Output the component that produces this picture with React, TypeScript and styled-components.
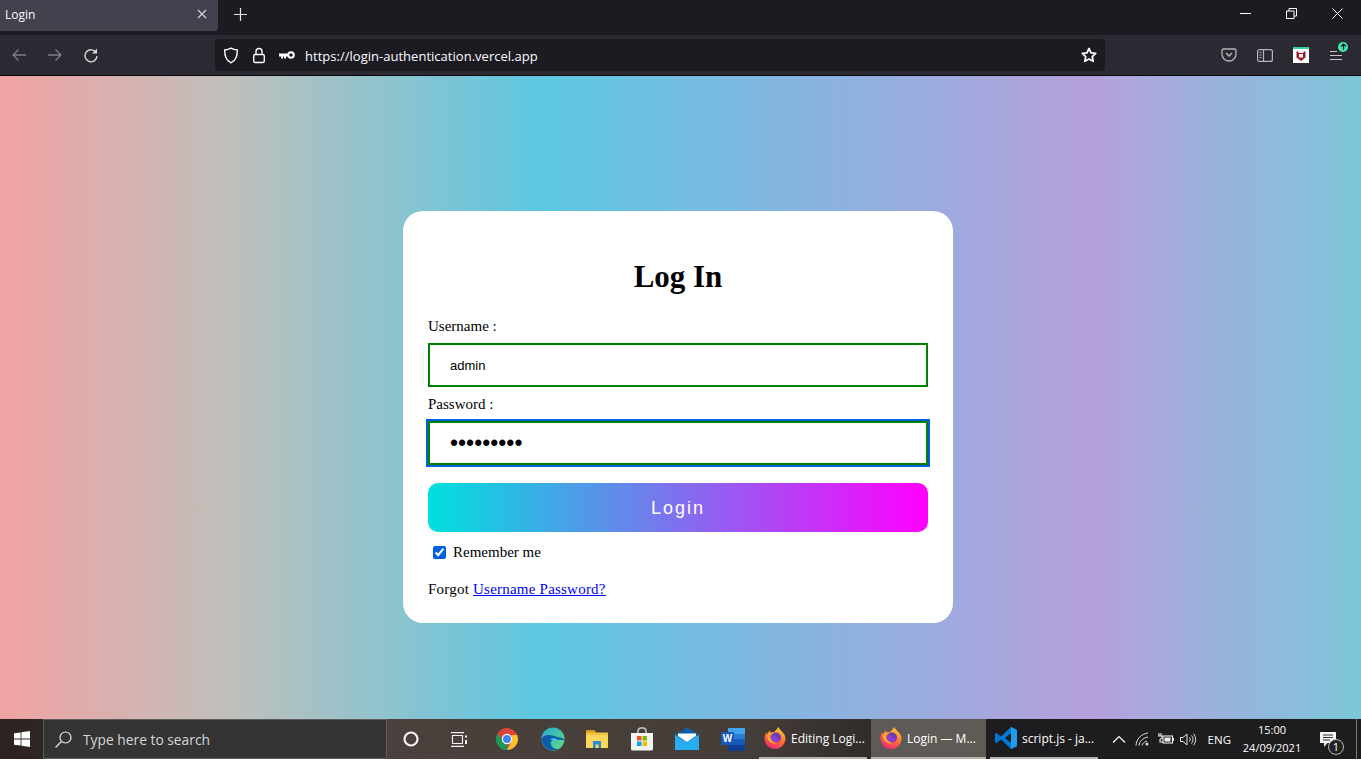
import styled, { createGlobalStyle } from "styled-components";

const GlobalStyle = createGlobalStyle`
  html, body {
    margin: 0;
    padding: 0;
    background: #fff;
    overflow: hidden;
  }
`;

const uiFont = `"Open Sans", "Noto Sans", sans-serif`;

const Screen = styled.div`
  width: 1361px;
  height: 765px;
  display: flex;
  flex-direction: column;
  overflow: hidden;
`;

const TabStrip = styled.div`
  height: 35px;
  flex: none;
  display: flex;
  background: #1c1b22;
  color: #fbfbfe;
  font-family: ${uiFont};
`;

const Tab = styled.div`
  width: 218px;
  height: 31px;
  padding: 0 11px 3px 5px;
  box-sizing: border-box;
  display: flex;
  align-items: center;
  justify-content: space-between;
  background: #42414d;
  border-radius: 0 0 4px 0;
  font-size: 12px;
`;

const IconBtn = styled.div<{ $w?: number; $dim?: boolean }>`
  width: ${(p) => p.$w ?? 36}px;
  flex: none;
  display: flex;
  align-items: center;
  justify-content: center;
  opacity: ${(p) => (p.$dim ? 0.4 : 1)};
`;

const NewTab = styled(IconBtn)`
  height: 28px;
  margin-left: 4px;
`;

const WindowControls = styled.div`
  margin-left: auto;
  height: 26px;
  display: flex;
  padding-right: 1px;
`;

const WindowBtn = styled(IconBtn)`
  width: 46px;
`;

const Toolbar = styled.div`
  height: 41px;
  flex: none;
  box-sizing: border-box;
  display: flex;
  align-items: center;
  padding: 0 6px 0 1px;
  background: #2b2a33;
  border-bottom: 1px solid #0c0c0d;
  color: #fbfbfe;
`;

const UrlBar = styled.div`
  width: 890px;
  height: 32px;
  margin-left: 106px;
  margin-right: 106px;
  padding: 0 8px;
  box-sizing: border-box;
  display: flex;
  align-items: center;
  gap: 12px;
  background: #1c1b22;
  border-radius: 4px;
  font-family: ${uiFont};
  font-size: 13px;
`;

const UrlText = styled.span`
  margin-left: -2px;
  padding-top: 2px;
  flex: 1;
  letter-spacing: 0.02px;
`;

const ToolIcon = styled(IconBtn)`
  width: 36px;
`;

const MenuBtn = styled(IconBtn)`
  position: relative;
  height: 39px;
`;

const UpdateDot = styled.span`
  position: absolute;
  left: 19px;
  top: 6px;
  width: 10px;
  height: 10px;
  border-radius: 50%;
  background: #3fe8b0;
  display: flex;
  align-items: center;
  justify-content: center;
`;

const Backdrop = styled.main`
  height: 643px;
  flex: none;
  padding: 135px 5px 0 0;
  box-sizing: border-box;
  display: flex;
  justify-content: center;
  align-items: flex-start;
  background: linear-gradient(
    90deg,
    #f0a2a2 0%,
    #bfbfbb 17%,
    #5cc7e2 40%,
    #b6a0dc 80%,
    #7cc6d9 100%
  );
`;

const Card = styled.form`
  width: 550px;
  height: 412px;
  padding: 48px 25px 0;
  box-sizing: border-box;
  background: #fff;
  border-radius: 20px;
  font-family: "Liberation Serif", "Times New Roman", serif;
  font-size: 15px;
  color: #000;
`;

const Title = styled.h1`
  margin: 0 0 23px;
  text-align: center;
  font-size: 31px;
  line-height: 36px;
  font-weight: 700;
`;

const FieldLabel = styled.label`
  display: block;
  height: 17px;
  line-height: 17px;
  margin-bottom: 8px;
`;

const TextField = styled.input<{ $focused?: boolean }>`
  display: block;
  width: 100%;
  height: 44px;
  padding: 0 20px;
  box-sizing: border-box;
  margin-bottom: 9px;
  border: 2px solid #008000;
  border-radius: 0;
  outline: ${(p) => (p.$focused ? "2px solid #0060df" : "none")};
  outline-offset: 0;
  background: #fff;
  font-family: "Liberation Sans", Arial, sans-serif;
  font-size: 13px;
  color: #000;
`;

const PasswordField = styled(TextField)`
  font-size: 23px;
  margin-bottom: 18px;
`;

const LoginButton = styled.button`
  display: block;
  width: 100%;
  height: 49px;
  padding: 1px 0 0;
  border: 0;
  border-radius: 10px;
  background: linear-gradient(90deg, #00e0de 0%, #ff00ff 100%);
  color: #fff;
  font-family: "Liberation Sans", Arial, sans-serif;
  font-size: 18px;
  letter-spacing: 2px;
`;

const RememberRow = styled.label`
  display: flex;
  align-items: center;
  height: 17px;
  margin: 12px 0 20px 5px;
`;

const RememberBox = styled.input`
  width: 13px;
  height: 13px;
  margin: 0 7px 0 0;
  accent-color: #0060df;
`;

const ForgotLine = styled.div`
  height: 17px;
  line-height: 17px;
  letter-spacing: 0.22px;
`;

const ForgotLink = styled.a`
  color: #0000ee;
  text-decoration: underline;
`;

const Taskbar = styled.div`
  height: 40px;
  flex: none;
  display: flex;
  align-items: stretch;
  background: linear-gradient(90deg, #2c2320 0%, #4a413c 28%, #453d38 55%, #1d1c1e 73%, #1d1c1e 100%);
  color: #fff;
  font-family: ${uiFont};
`;

const StartBtn = styled(IconBtn)`
  width: 43px;
`;

const SearchBox = styled.div`
  width: 344px;
  flex: none;
  box-sizing: border-box;
  display: flex;
  align-items: center;
  gap: 11px;
  padding-left: 11px;
  background: #343434;
  border: 1px solid #5c5c5c;
  color: #d6d6d6;
  font-size: 13.8px;
`;

const TrayIcon = styled(IconBtn)``;

const AppTask = styled.div<{ $w: number; $active?: boolean }>`
  width: ${(p) => p.$w}px;
  flex: none;
  box-sizing: border-box;
  margin-left: 4px;
  display: flex;
  align-items: center;
  gap: 4px;
  padding-left: ${(p) => (p.$active ? 8 : 4)}px;
  font-size: 12px;
  white-space: nowrap;
  background: ${(p) => (p.$active ? "#5f5a56" : "transparent")};
  border-bottom: 2px solid #b5b3ae;
`;

const Tray = styled.div`
  margin-left: auto;
  display: flex;
  align-items: center;
  font-size: 11.5px;
`;

const Lang = styled.span`
  margin-left: 7px;
`;

const Clock = styled.div`
  width: 62px;
  text-align: center;
  font-size: 11px;
  line-height: 18px;
  margin-left: 10px;
`;

const NotificationWrap = styled.div`
  position: relative;
  width: 47px;
  height: 40px;
  padding-left: 11px;
  margin-left: 6px;
  box-sizing: border-box;
  display: flex;
  align-items: center;
`;

const NotificationBadge = styled.span`
  position: absolute;
  left: 19px;
  top: 20px;
  width: 16px;
  height: 16px;
  box-sizing: border-box;
  border: 1px solid #b8b8b8;
  border-radius: 50%;
  background: #222;
  font-size: 11px;
  line-height: 14px;
  text-align: center;
`;

const ShowDesktop = styled.div`
  width: 1px;
  height: 40px;
  margin-right: 4px;
  background: #7a7a7a;
`;

const Bottom = styled.div`
  flex: 1;
  background: #fff;
`;

const FirefoxIcon = ({ id }: { id: string }) => (
  <svg width="24" height="24" viewBox="0 0 24 24">
    <defs>
      <linearGradient id={id} x1="0.75" y1="0" x2="0.3" y2="1">
        <stop offset="0" stopColor="#ffd23a" />
        <stop offset="0.45" stopColor="#ff7a2e" />
        <stop offset="1" stopColor="#f0247a" />
      </linearGradient>
    </defs>
    <path d="M15.500 1c.6 2 2 3 3.400 4.400 2.400 2.300 3.600 4.600 3.600 7.100 0 5.800-4.700 10.500-10.500 10.500S1.500 18.300 1.500 12.500c0-2.300.6-4.500 1.700-6.500 0 1 .3 1.800.9 2.400.4-1.800 1.500-3.200 3-4-.2 1 0 1.700.5 2.200 1-.6 2.300-.8 3.600-.5C13 3.500 14.600 2.500 15.500 1z" fill={`url(#${id})`} />
    <circle cx="13" cy="11.500" r="5" fill="#6a3bb8" />
    <path d="M7.500 10c2-1 4.500-1 5.800 0 1.200.9 1.200 2.400 0 2.800 1.500.4 3-.2 3.500-2 .7 3-1.300 5.500-4.300 5.500-3 0-5-2.500-5-5 0-.5 0-.9 0-1.300z" fill="#8f3fd0" />
    <path d="M4.600 8.500c1.500-1.600 4-2.200 6.100-1.500-2 .3-3.500 1.300-4 3 .4 3 2.800 6.500 7 7-3.500 1.500-9-1-9.600-6.500 0-.7.100-1.400.5-2z" fill="#ffb12b" />
  </svg>
);

export default function App() {
  return (
    <Screen>
      <GlobalStyle />
      <TabStrip>
        <Tab>
          <span>Login</span>
          <svg width="10" height="10" viewBox="0 0 10 10" stroke="#d8d8da" strokeWidth="1.100">
            <path d="M1 1l8 8M9 1l-8 8" />
          </svg>
        </Tab>
        <NewTab>
          <svg width="13" height="13" viewBox="0 0 13 13" stroke="#e4e4e6" strokeWidth="1.200">
            <path d="M6.500 0v13M0 6.500h13" />
          </svg>
        </NewTab>
        <WindowControls>
          <WindowBtn>
            <svg width="11" height="1" viewBox="0 0 11 1"><rect width="11" height="1" fill="#fff" /></svg>
          </WindowBtn>
          <WindowBtn>
            <svg width="11" height="11" viewBox="0 0 11 11" fill="none" stroke="#fff">
              <path d="M.5 3h7.500v7.500H.5zM3 3V.5h7.500V8H8" />
            </svg>
          </WindowBtn>
          <WindowBtn>
            <svg width="11" height="11" viewBox="0 0 11 11" stroke="#fff">
              <path d="M.5.5l10 10M10.500.5l-10 10" />
            </svg>
          </WindowBtn>
        </WindowControls>
      </TabStrip>

      <Toolbar>
        <ToolIcon $dim>
          <svg width="16" height="16" viewBox="0 0 16 16" fill="none" stroke="#fbfbfe" strokeWidth="1.300">
            <path d="M15 8H2M7.500 2.500L2 8l5.500 5.500" />
          </svg>
        </ToolIcon>
        <ToolIcon $dim>
          <svg width="16" height="16" viewBox="0 0 16 16" fill="none" stroke="#fbfbfe" strokeWidth="1.300">
            <path d="M1 8h13M8.500 2.500L14 8l-5.500 5.500" />
          </svg>
        </ToolIcon>
        <ToolIcon>
          <svg width="16" height="16" viewBox="0 0 16 16" fill="none" stroke="#d8d8da" strokeWidth="1.400">
            <path d="M13.300 6A6 6 0 1 0 14 9" />
            <path d="M14 1.500V6.500H9z" fill="#d8d8da" stroke="none" />
          </svg>
        </ToolIcon>
        <UrlBar>
          <svg width="16" height="17" viewBox="0 0 16 17" fill="none" stroke="#fbfbfe" strokeWidth="1.400">
            <path d="M8 1.200c2 1.200 4 1.700 6.300 1.800.2 6.500-2 10.800-6.300 12.800C3.700 13.800 1.500 9.500 1.700 3 4 2.900 6 2.400 8 1.200z" />
          </svg>
          <svg width="16" height="17" viewBox="0 0 16 17" fill="none" stroke="#fbfbfe" strokeWidth="1.400">
            <rect x="2.700" y="7.500" width="10.600" height="8" rx="1.500" />
            <path d="M5 7.500V4.500a3 3 0 0 1 6 0v3" />
          </svg>
          <svg width="16" height="10" viewBox="0 0 16 10">
            <path d="M0 3.500h9v3H7v2H5v-2H4v2H2v-2H0z" fill="#fbfbfe" />
            <circle cx="12" cy="5" r="2.800" fill="none" stroke="#fbfbfe" strokeWidth="2" />
          </svg>
          <UrlText>https://login-authentication.vercel.app</UrlText>
          <svg width="16" height="16" viewBox="0 0 16 16" fill="none" stroke="#fbfbfe" strokeWidth="1.800" strokeLinejoin="round">
            <path d="M8 1.500l2 4.300 4.700.6-3.400 3.200.9 4.700L8 12l-4.200 2.300.9-4.700L1.300 6.400 6 5.800z" />
          </svg>
        </UrlBar>
        <ToolIcon>
          <svg width="16" height="14" viewBox="0 0 16 14" fill="none" stroke="#b5b5b9" strokeWidth="1.300">
            <path d="M2.500 1h11A1.500 1.500 0 0 1 15 2.500V6A7 7 0 0 1 1 6V2.500A1.500 1.500 0 0 1 2.500 1z" />
            <path d="M5 5l3 3 3-3" strokeWidth="1.500" />
          </svg>
        </ToolIcon>
        <ToolIcon>
          <svg width="16" height="13" viewBox="0 0 16 13" fill="none" stroke="#b5b5b9" strokeWidth="1.200">
            <rect x=".6" y=".6" width="14.800" height="11.800" rx="2" />
            <path d="M6.500.6v11.800M2.500 3.500h2M2.500 6h2M2.500 8.500h2" />
          </svg>
        </ToolIcon>
        <ToolIcon>
          <svg width="16" height="16" viewBox="0 0 16 16">
            <rect width="16" height="16" fill="#fff" />
            <rect width="16" height="2" fill="#34d399" />
            <path d="M3.500 4.500h2v1.500h5V4.500h2v6L8 14l-4.500-3.500z" fill="#a31621" />
            <rect x="6" y="7" width="4" height="3.500" fill="#fff" />
          </svg>
        </ToolIcon>
        <MenuBtn>
          <svg width="14" height="11" viewBox="0 0 14 11" stroke="#c8c8cc" strokeWidth="1.200">
            <path d="M0 1.500h7M0 5.500h12M0 9.500h12" />
          </svg>
          <UpdateDot>
            <svg width="7" height="7" viewBox="0 0 7 7" stroke="#1c1b22" strokeWidth="1.200" fill="none">
              <path d="M3.500 7V1M1 3.500L3.500 1 6 3.500" />
            </svg>
          </UpdateDot>
        </MenuBtn>
      </Toolbar>

      <Backdrop>
        <Card onSubmit={(e) => e.preventDefault()}>
          <Title>Log In</Title>
          <FieldLabel htmlFor="username">Username :</FieldLabel>
          <TextField id="username" defaultValue="admin" />
          <FieldLabel htmlFor="password">Password :</FieldLabel>
          <PasswordField id="password" type="password" defaultValue="123456789" $focused />
          <LoginButton type="submit">Login</LoginButton>
          <RememberRow>
            <RememberBox type="checkbox" defaultChecked />
            Remember me
          </RememberRow>
          <ForgotLine>
            Forgot <ForgotLink href="#">Username Password?</ForgotLink>
          </ForgotLine>
        </Card>
      </Backdrop>

      <Taskbar>
        <StartBtn>
          <svg width="16" height="16" viewBox="0 0 16 16" fill="#fff">
            <path d="M0 2.300l6.600-.9v6.200H0zM7.400 1.300L16 0v7.600H7.400zM0 8.400h6.600v6.200L0 13.700zM7.400 8.400H16V16l-8.600-1.300z" />
          </svg>
        </StartBtn>
        <SearchBox>
          <svg width="17" height="17" viewBox="0 0 17 17" fill="none" stroke="#e4e4e4" strokeWidth="1.200">
            <circle cx="10.500" cy="6.500" r="5.500" />
            <path d="M6.500 10.500L.5 16.500" />
          </svg>
          Type here to search
        </SearchBox>
        <TrayIcon $w={48}>
          <svg width="16" height="16" viewBox="0 0 16 16" fill="none" stroke="#f2f2f2" strokeWidth="2.200">
            <circle cx="8" cy="8" r="6.500" />
          </svg>
        </TrayIcon>
        <TrayIcon $w={48}>
          <svg width="16" height="15" viewBox="0 0 16 15" fill="none" stroke="#f2f2f2" strokeWidth="1.100">
            <path d="M0 .6h13M0 14.400h13M1.500 3.500h10v8h-10z" />
            <path d="M15 3.500v2M15 8v4" strokeWidth="2" />
          </svg>
        </TrayIcon>
        <TrayIcon $w={48}>
          <svg width="24" height="24" viewBox="0 0 24 24">
            <circle cx="12" cy="12" r="11" fill="#db4437" />
            <path d="M12 12L2.500 17.500A11 11 0 0 0 12 23z" fill="#0f9d58" />
            <path d="M2.500 6.500A11 11 0 0 0 2.500 17.500L8 14z" fill="#0f9d58" />
            <path d="M23 12a11 11 0 0 1-11 11l5-9.500V8h5.200z" fill="#fbc02d" />
            <circle cx="12" cy="12" r="5.200" fill="#fff" />
            <circle cx="12" cy="12" r="4" fill="#4285f4" />
          </svg>
        </TrayIcon>
        <TrayIcon $w={43}>
          <svg width="24" height="24" viewBox="0 0 24 24">
            <defs>
              <linearGradient id="edgeTop" x1="0" y1="0" x2="1" y2="1">
                <stop offset="0" stopColor="#2aa7d8" />
                <stop offset="1" stopColor="#5fe07c" />
              </linearGradient>
            </defs>
            <circle cx="12" cy="12" r="11.500" fill="url(#edgeTop)" />
            <path d="M.6 12C1 18 6 23.500 12 23.500c2.500 0 4.500-.6 6-1.700-4 .8-7-1-8-4-.7-2.300.2-4.800 3-5.300 2-.4 5 .4 10.500.5 0-1-3-2.500-6-2.500C10 7 2 7 .6 12z" fill="#0c5ba8" />
            <path d="M9 13c1-1.500 2.500-2 4-2 2.500 0 3 2 3 2H9z" fill="#35c1e1" />
          </svg>
        </TrayIcon>
        <TrayIcon $w={46}>
          <svg width="22" height="20" viewBox="0 0 22 20">
            <path d="M0 2a1 1 0 0 1 1-1h7l2 2.500h11a1 1 0 0 1 1 1V19H0z" fill="#f5c342" />
            <path d="M0 1h8l2 2.500H0z" fill="#d99a1f" />
            <rect y="6" width="22" height="13" fill="#fbd75a" />
            <path d="M7 12h8v7h-2.500v-3.500h-3V19H7z" fill="#2b88d8" />
          </svg>
        </TrayIcon>
        <TrayIcon $w={43}>
          <svg width="24" height="24" viewBox="0 0 24 24">
            <path d="M8 6V4a3 3 0 0 1 3-3h2a3 3 0 0 1 3 3v2" fill="none" stroke="#c9c9c9" strokeWidth="1.500" />
            <path d="M1 6h22v16a1.500 1.500 0 0 1-1.500 1.500h-19A1.500 1.500 0 0 1 1 22z" fill="#f3f3f3" />
            <rect x="7" y="9" width="4.500" height="4.500" fill="#f25022" />
            <rect x="12.500" y="9" width="4.500" height="4.500" fill="#7fba00" />
            <rect x="7" y="14.500" width="4.500" height="4.500" fill="#00a4ef" />
            <rect x="12.500" y="14.500" width="4.500" height="4.500" fill="#ffb900" />
          </svg>
        </TrayIcon>
        <TrayIcon $w={47}>
          <svg width="24" height="22" viewBox="0 0 24 22">
            <path d="M0 7L12 0l12 7v15H0z" fill="#1a9ce8" />
            <path d="M0 7L12 0l12 7-12 7z" fill="#0c5ea8" />
            <path d="M3 5.500h18V8l-9 6-9-6z" fill="#fff" />
            <path d="M0 7l12 8 12-8v15H0z" fill="#27aef0" />
          </svg>
        </TrayIcon>
        <TrayIcon $w={45}>
          <svg width="24" height="23" viewBox="0 0 24 23">
            <rect x="7" y="0" width="17" height="23" rx="1" fill="#2b7cd3" />
            <rect x="7" y="0" width="17" height="6" fill="#41a5ee" />
            <rect x="7" y="11" width="17" height="6" fill="#185abd" />
            <rect x="7" y="17" width="17" height="6" fill="#103f91" />
            <rect x="0" y="4" width="13" height="13" rx="1" fill="#185abd" />
            <text x="6.500" y="14" fontFamily="Liberation Sans, sans-serif" fontWeight="700" fontSize="10" fill="#fff" textAnchor="middle">W</text>
          </svg>
        </TrayIcon>
        <AppTask $w={108}>
          <FirefoxIcon id="ffEditing" />
          Editing Logi...
        </AppTask>
        <AppTask $w={115} $active>
          <FirefoxIcon id="ffLogin" />
          Login — M...
        </AppTask>
        <AppTask $w={108}>
          <svg width="24" height="24" viewBox="0 0 24 24">
            <path d="M17 1l6 3v16l-6 3-10-9.500L2.500 17 1 16V8l1.500-1L7 10.500z" fill="#0078d4" />
            <path d="M17 7v10l-6-5z" fill="#1d1c1e" />
            <path d="M17 1l6 3v16l-6 3z" fill="#1f9cf0" />
          </svg>
          script.js - ja...
        </AppTask>
        <Tray>
          <TrayIcon $w={24}>
            <svg width="14" height="8" viewBox="0 0 14 8" fill="none" stroke="#fff" strokeWidth="1.200">
              <path d="M1 7.500L7 1.500l6 6" />
            </svg>
          </TrayIcon>
          <TrayIcon $w={24}>
            <svg width="15" height="14" viewBox="0 0 15 14" fill="none" stroke="#ddd" strokeWidth="1">
              <path d="M1 13.500C1.500 7 6 2 13 1M4 13.500C4.500 9.500 7.500 6 13 5M7 13.500C7.500 11.500 9.500 9.500 12 9" />
              <circle cx="12" cy="12" r="1.500" fill="#ddd" stroke="none" />
            </svg>
          </TrayIcon>
          <TrayIcon $w={22}>
            <svg width="16" height="12" viewBox="0 0 16 12" fill="none" stroke="#f0f0f0" strokeWidth="1.100">
              <rect x="5" y="3" width="9.500" height="7" />
              <rect x="6.500" y="4.500" width="6" height="4" fill="#f0f0f0" stroke="none" />
              <path d="M15.500 5v3M3 0v3M1 0v3M0 3h4v2l-2 1.500V9h3" />
            </svg>
          </TrayIcon>
          <TrayIcon $w={24}>
            <svg width="17" height="13" viewBox="0 0 17 13" fill="none" stroke="#e6e6e6" strokeWidth="1">
              <path d="M.5 4.500h2.500L7 1v11L3 8.500H.5zM9.500 4.500a3 3 0 0 1 0 4M11.500 2.500a6 6 0 0 1 0 8M13.500.8a8.500 8.500 0 0 1 0 11.400" />
            </svg>
          </TrayIcon>
          <Lang>ENG</Lang>
          <Clock>
            15:00
            <br />
            24/09/2021
          </Clock>
          <NotificationWrap>
            <svg width="16" height="15" viewBox="0 0 16 15" fill="#f4f4f4">
              <path d="M0 0h16v11H7.500L4 15v-4H0z" />
              <path d="M3 3h10M3 5.500h10M3 8h7" stroke="#333" strokeWidth="1" />
            </svg>
            <NotificationBadge>1</NotificationBadge>
          </NotificationWrap>
          <ShowDesktop />
        </Tray>
      </Taskbar>
      <Bottom />
    </Screen>
  );
}
